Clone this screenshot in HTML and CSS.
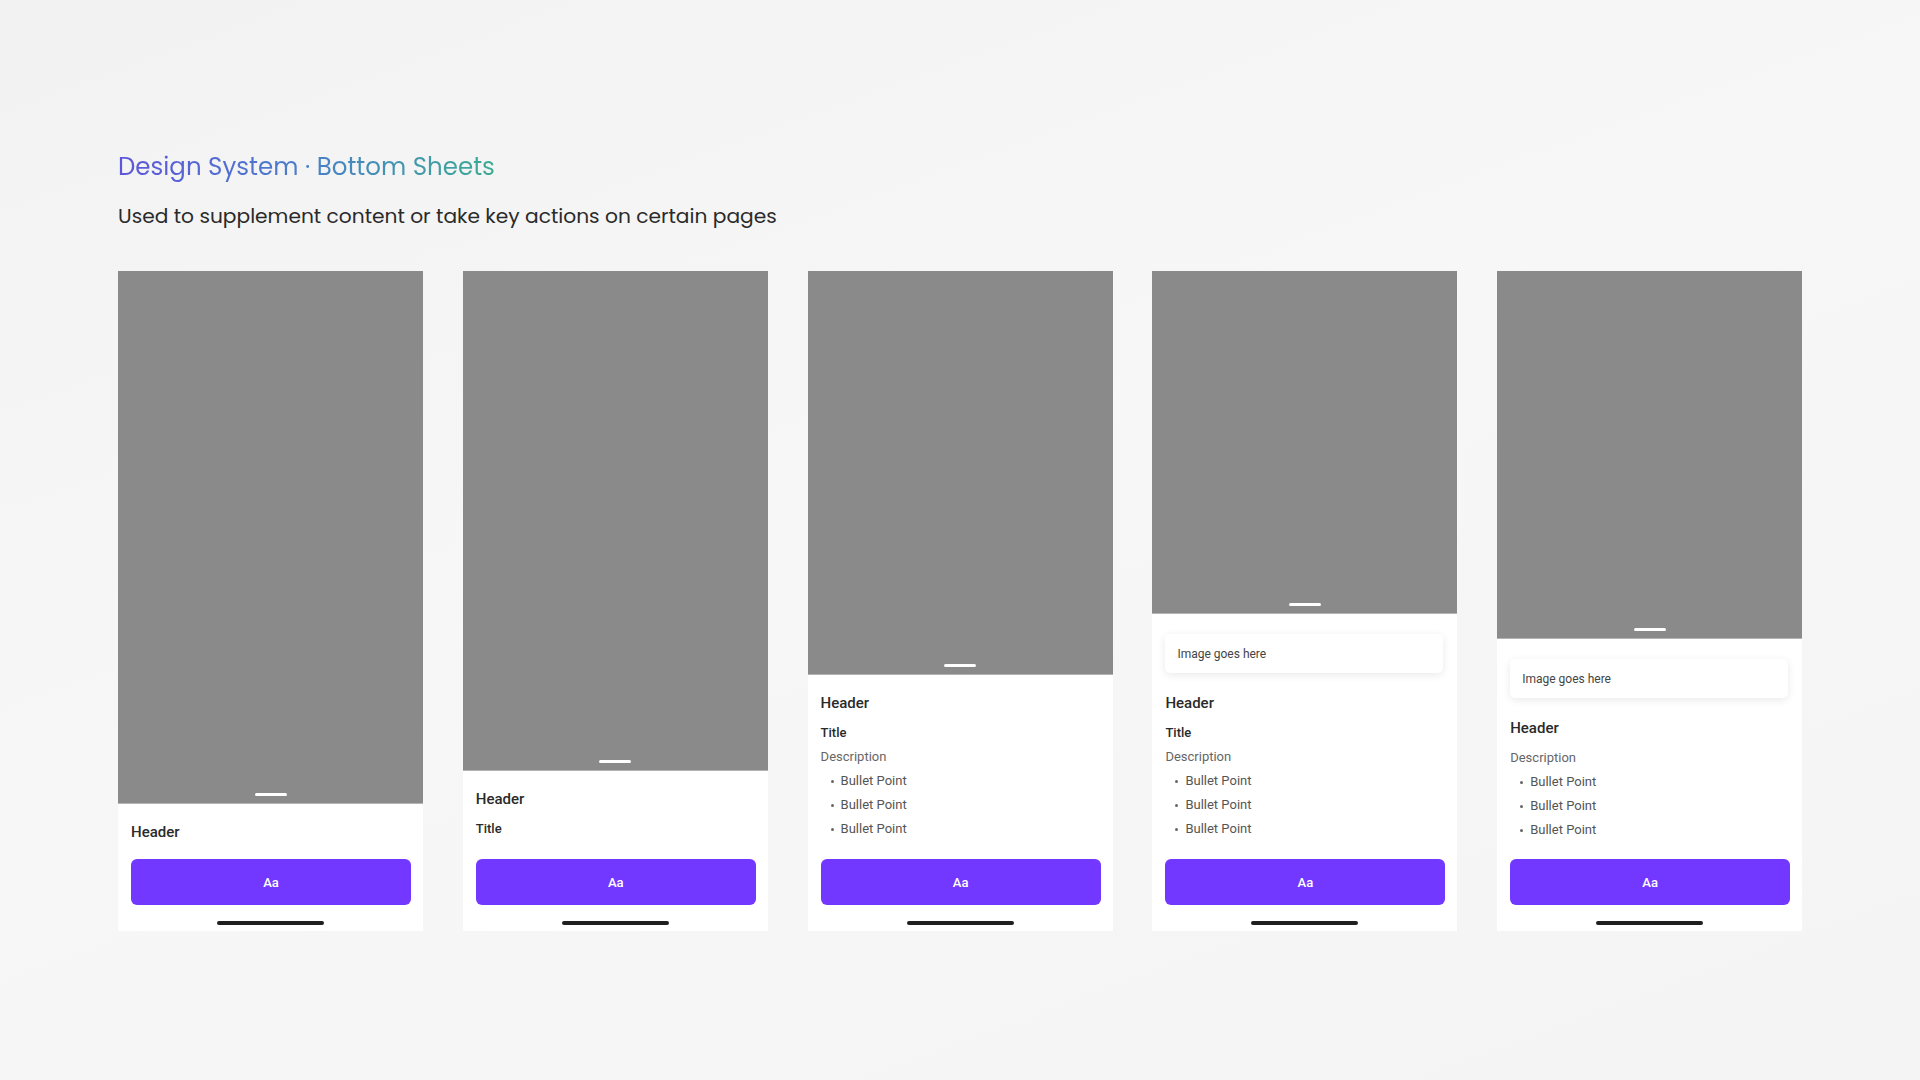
FILE: index.html
```html
<!DOCTYPE html>
<html lang="en">
<head>
<meta charset="utf-8">
<title>Design System · Bottom Sheets</title>
<link rel="stylesheet" href="styles.css">
</head>
<body>
<main class="page">
  <header class="intro">
    <h1 class="headline">Design System · Bottom Sheets</h1>
    <p class="subtitle">Used to supplement content or take key actions on certain pages</p>
  </header>

  <section class="cards">
    <!-- 1 -->
    <article class="card">
      <div class="screen"><span class="grab"></span></div>
      <div class="sheet">
        <div class="s-header">Header</div>
        <button class="cta cta-m15">Aa</button>
        <div class="home"><span class="home-bar"></span></div>
      </div>
    </article>

    <!-- 2 -->
    <article class="card">
      <div class="screen"><span class="grab"></span></div>
      <div class="sheet">
        <div class="s-header">Header</div>
        <div class="s-title">Title</div>
        <button class="cta">Aa</button>
        <div class="home"><span class="home-bar"></span></div>
      </div>
    </article>

    <!-- 3 -->
    <article class="card">
      <div class="screen"><span class="grab"></span></div>
      <div class="sheet">
        <div class="s-header">Header</div>
        <div class="s-title">Title</div>
        <div class="s-desc">Description</div>
        <ul class="bullets">
          <li>Bullet Point</li>
          <li>Bullet Point</li>
          <li>Bullet Point</li>
        </ul>
        <button class="cta">Aa</button>
        <div class="home"><span class="home-bar"></span></div>
      </div>
    </article>

    <!-- 4 -->
    <article class="card">
      <div class="screen"><span class="grab"></span></div>
      <div class="sheet">
        <div class="image-box">Image goes here</div>
        <div class="s-header">Header</div>
        <div class="s-title">Title</div>
        <div class="s-desc">Description</div>
        <ul class="bullets">
          <li>Bullet Point</li>
          <li>Bullet Point</li>
          <li>Bullet Point</li>
        </ul>
        <button class="cta">Aa</button>
        <div class="home"><span class="home-bar"></span></div>
      </div>
    </article>

    <!-- 5 -->
    <article class="card">
      <div class="screen"><span class="grab"></span></div>
      <div class="sheet">
        <div class="image-box">Image goes here</div>
        <div class="s-header">Header</div>
        <div class="s-desc s-desc-gap">Description</div>
        <ul class="bullets">
          <li>Bullet Point</li>
          <li>Bullet Point</li>
          <li>Bullet Point</li>
        </ul>
        <button class="cta cta-m17">Aa</button>
        <div class="home"><span class="home-bar"></span></div>
      </div>
    </article>
  </section>
</main>
</body>
</html>
```

FILE: styles.css
```css
* { box-sizing: border-box; }

html, body {
  margin: 0;
  padding: 0;
  width: 1920px;
  height: 1080px;
  overflow: hidden;
}

body {
  background: linear-gradient(160deg, #f2f2f2 0%, #f7f7f7 45%, #f4f4f4 100%);
  font-family: Roboto, "Liberation Sans", sans-serif;
}

.page {
  padding: 151px 0 0 118px;
}

.intro {
  height: 120px;
}

.headline {
  margin: 0;
  font-family: Poppins, Lato, "Open Sans", sans-serif;
  font-weight: 400;
  font-size: 24.5px;
  line-height: 32px;
  display: inline-block;
  background: linear-gradient(90deg, #5d55da 0%, #4a7fca 50%, #3bab93 100%);
  -webkit-background-clip: text;
  background-clip: text;
  color: transparent;
}

.subtitle {
  margin: 19px 0 0;
  font-family: Poppins, Lato, "Open Sans", sans-serif;
  font-size: 20.2px;
  line-height: 28px;
  color: #2a2a2a;
}

.cards {
  display: flex;
  gap: 39.8px;
}

.card {
  width: 305px;
  height: 660px;
  background: #ffffff;
  display: flex;
  flex-direction: column;
}

.screen {
  flex: 1;
  background: #8a8a8a;
  display: flex;
  align-items: flex-end;
  justify-content: center;
  padding-bottom: 7px;
  border-bottom: 1px solid #b4b4b4;
}

.grab {
  width: 32px;
  height: 3px;
  border-radius: 2px;
  background: #ffffff;
}

.sheet {
  padding: 16px 12px 0 13px;
  display: flex;
  flex-direction: column;
}

.image-box {
  margin: 4px 2px 18px 0;
  height: 39px;
  border-radius: 5px;
  background: #fff;
  box-shadow: 0 2px 9px rgba(0, 0, 0, 0.09);
  display: flex;
  align-items: center;
  padding-left: 12px;
  font-size: 12px;
  color: #444;
}

.s-header {
  font-size: 15px;
  font-weight: 500;
  line-height: 24px;
  color: #2a2a2a;
}

.s-title {
  margin-top: 6px;
  font-size: 13px;
  font-weight: 500;
  line-height: 24px;
  color: #2a2a2a;
}

.s-desc {
  font-size: 13px;
  line-height: 24px;
  color: #666;
}

.s-desc-gap { margin-top: 6px; }

.bullets {
  list-style: none;
  margin: 0;
  padding: 0 0 0 10px;
}

.bullets li {
  position: relative;
  padding-left: 10px;
  font-size: 13px;
  line-height: 24px;
  color: #555;
}

.bullets li::before {
  content: "";
  position: absolute;
  left: 0;
  top: 11px;
  width: 3px;
  height: 3px;
  border-radius: 50%;
  background: #666;
}

.cta {
  margin-top: 18px;
  height: 46px;
  width: 280px;
  border: 0;
  border-radius: 6px;
  background: #7338ff;
  color: #fff;
  font-family: Roboto, "Liberation Sans", sans-serif;
  font-size: 13px;
  font-weight: 500;
  padding: 0;
}

.cta-m15 { margin-top: 15px; }
.cta-m17 { margin-top: 17px; }

.home {
  height: 26px;
  padding-top: 16px;
  display: flex;
  justify-content: center;
  margin-left: -1px;
}

.home-bar {
  width: 107px;
  height: 4px;
  border-radius: 2px;
  background: #1f1f1f;
}
```
